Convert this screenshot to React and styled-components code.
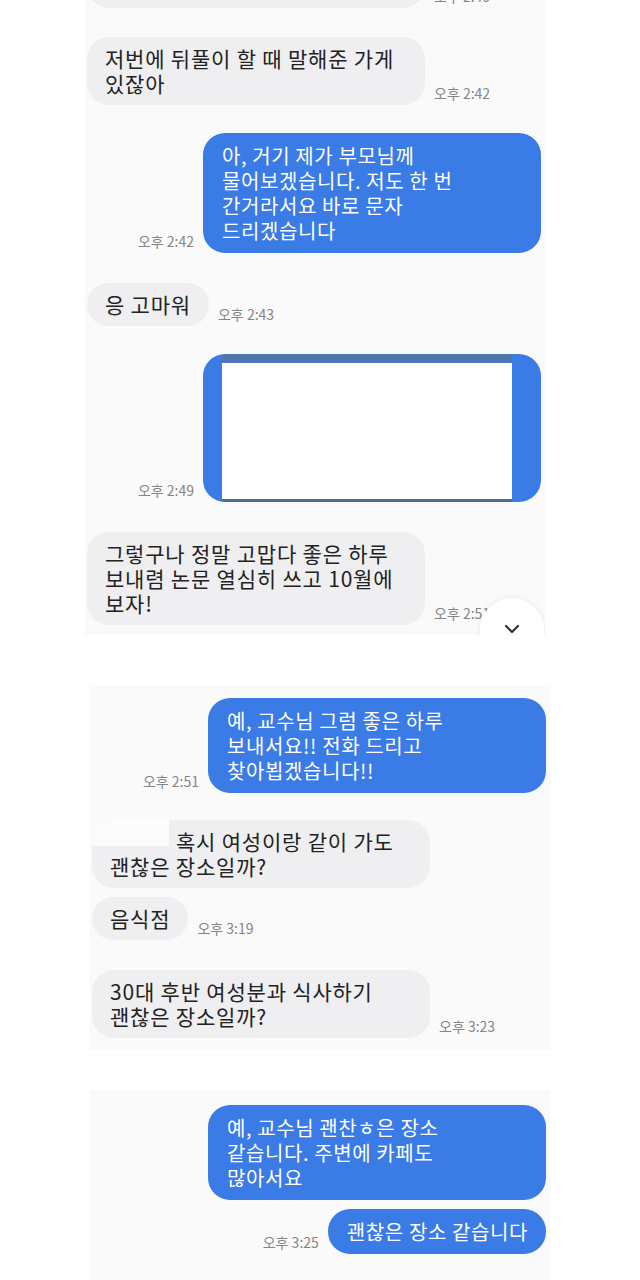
import React from 'react';
import styled, { createGlobalStyle } from 'styled-components';
import { ChevronDown } from 'lucide-react';

const GlobalStyle = createGlobalStyle`
  body {
    margin: 0;
    background: #ffffff;
    font-family: 'Noto Sans CJK KR', 'Noto Sans', sans-serif;
  }
`;

const Page = styled.div`
  width: 640px;
  height: 1280px;
  overflow: hidden;
  display: flex;
  flex-direction: column;
  background: #ffffff;
`;

const Panel = styled.section`
  position: relative;
  display: flex;
  flex-direction: column;
  width: 460px;
  height: ${(p) => p.$height || 'auto'};
  flex: ${(p) => (p.$grow ? 1 : 'none')};
  margin: ${(p) => p.$top || 0}px 0 0 ${(p) => p.$left || 85}px;
  padding: ${(p) => p.$padTop || 0}px 4px 0 2px;
  box-sizing: border-box;
  overflow: hidden;
  background: #fafafb;
`;

const Row = styled.div`
  display: flex;
  align-items: flex-end;
  justify-content: ${(p) => (p.$mine ? 'flex-end' : 'flex-start')};
  gap: 9px;
  margin-top: ${(p) => p.$space || 0}px;
`;

const Bubble = styled.div`
  position: relative;
  box-sizing: border-box;
  width: ${(p) => (p.$full ? '338px' : 'auto')};
  padding: ${(p) => (p.$mine ? '10px 18px 10px 19px' : '9px 18px 9px 18px')};
  border-radius: 22px;
  font-size: ${(p) => (p.$mine ? 20 : 21)}px;
  line-height: 25px;
  letter-spacing: ${(p) => (p.$mine ? 0.6 : 0.8)}px;
  color: ${(p) => (p.$mine ? '#ffffff' : '#222222')};
  background: ${(p) => (p.$mine ? '#3a7be6' : '#efeff1')};
  white-space: nowrap;
  overflow: hidden;
`;

const Time = styled.span`
  margin-bottom: 3px;
  font-size: 14px;
  line-height: 18px;
  color: #858585;
  white-space: nowrap;
`;

const PhotoBubble = styled.div`
  box-sizing: border-box;
  width: 338px;
  height: 148px;
  padding: 0 29px 0 19px;
  border-radius: 22px;
  background: #3a7be6;
  display: flex;
  overflow: hidden;
`;

const Redacted = styled.div`
  flex: 1;
  background: #ffffff;
  border-top: 9px solid #4f77ae;
  border-bottom: 3px solid #4b6b9c;
`;

const Patch = styled.div`
  position: absolute;
  left: 0;
  top: 0;
  width: 77px;
  height: 26px;
  background: #fcfcfd;
`;

const Indent = styled.span`
  display: inline-block;
  width: 66px;
`;

const ScrollButton = styled.div`
  position: absolute;
  right: 1px;
  bottom: -27px;
  width: 64px;
  height: 64px;
  border-radius: 50%;
  background: #ffffff;
  box-shadow: 0 0 6px rgba(0, 0, 0, 0.07);
  display: flex;
  justify-content: center;
  padding-top: 19px;
  box-sizing: border-box;
  color: #333333;
`;

export default function App() {
  return (
    <Page>
      <GlobalStyle />
      <Panel $height="635px">
        <Row $space={-60}>
          <Bubble $full>
            &nbsp;
            <br />
            &nbsp;
          </Bubble>
          <Time>오후 2:40</Time>
        </Row>
        <Row $space={29}>
          <Bubble $full>
            저번에 뒤풀이 할 때 말해준 가게
            <br />
            있잖아
          </Bubble>
          <Time>오후 2:42</Time>
        </Row>
        <Row $mine $space={28}>
          <Time>오후 2:42</Time>
          <Bubble $mine $full>
            아, 거기 제가 부모님께
            <br />
            물어보겠습니다. 저도 한 번
            <br />
            간거라서요 바로 문자
            <br />
            드리겠습니다
          </Bubble>
        </Row>
        <Row $space={30}>
          <Bubble>응 고마워</Bubble>
          <Time>오후 2:43</Time>
        </Row>
        <Row $mine $space={28}>
          <Time>오후 2:49</Time>
          <PhotoBubble>
            <Redacted />
          </PhotoBubble>
        </Row>
        <Row $space={30}>
          <Bubble $full>
            그렇구나 정말 고맙다 좋은 하루
            <br />
            보내렴 논문 열심히 쓰고 10월에
            <br />
            보자!
          </Bubble>
          <Time>오후 2:51</Time>
        </Row>
        <ScrollButton>
          <ChevronDown size={24} strokeWidth={2.2} />
        </ScrollButton>
      </Panel>

      <Panel $left={90} $top={50} $height="365px" $padTop={13}>
        <Row $mine>
          <Time>오후 2:51</Time>
          <Bubble $mine $full>
            예, 교수님 그럼 좋은 하루
            <br />
            보내서요!! 전화 드리고
            <br />
            찾아뵙겠습니다!!
          </Bubble>
        </Row>
        <Row $space={27}>
          <Bubble $full>
            <Patch />
            <Indent />
            혹시 여성이랑 같이 가도
            <br />
            괜찮은 장소일까?
          </Bubble>
        </Row>
        <Row $space={9}>
          <Bubble>음식점</Bubble>
          <Time>오후 3:19</Time>
        </Row>
        <Row $space={30}>
          <Bubble $full>
            30대 후반 여성분과 식사하기
            <br />
            괜찮은 장소일까?
          </Bubble>
          <Time>오후 3:23</Time>
        </Row>
      </Panel>

      <Panel $left={90} $top={40} $grow $padTop={15}>
        <Row $mine>
          <Bubble $mine $full>
            예, 교수님 괜찬ㅎ은 장소
            <br />
            같습니다. 주변에 카페도
            <br />
            많아서요
          </Bubble>
        </Row>
        <Row $mine $space={9}>
          <Time>오후 3:25</Time>
          <Bubble $mine>괜찮은 장소 같습니다</Bubble>
        </Row>
      </Panel>
    </Page>
  );
}
